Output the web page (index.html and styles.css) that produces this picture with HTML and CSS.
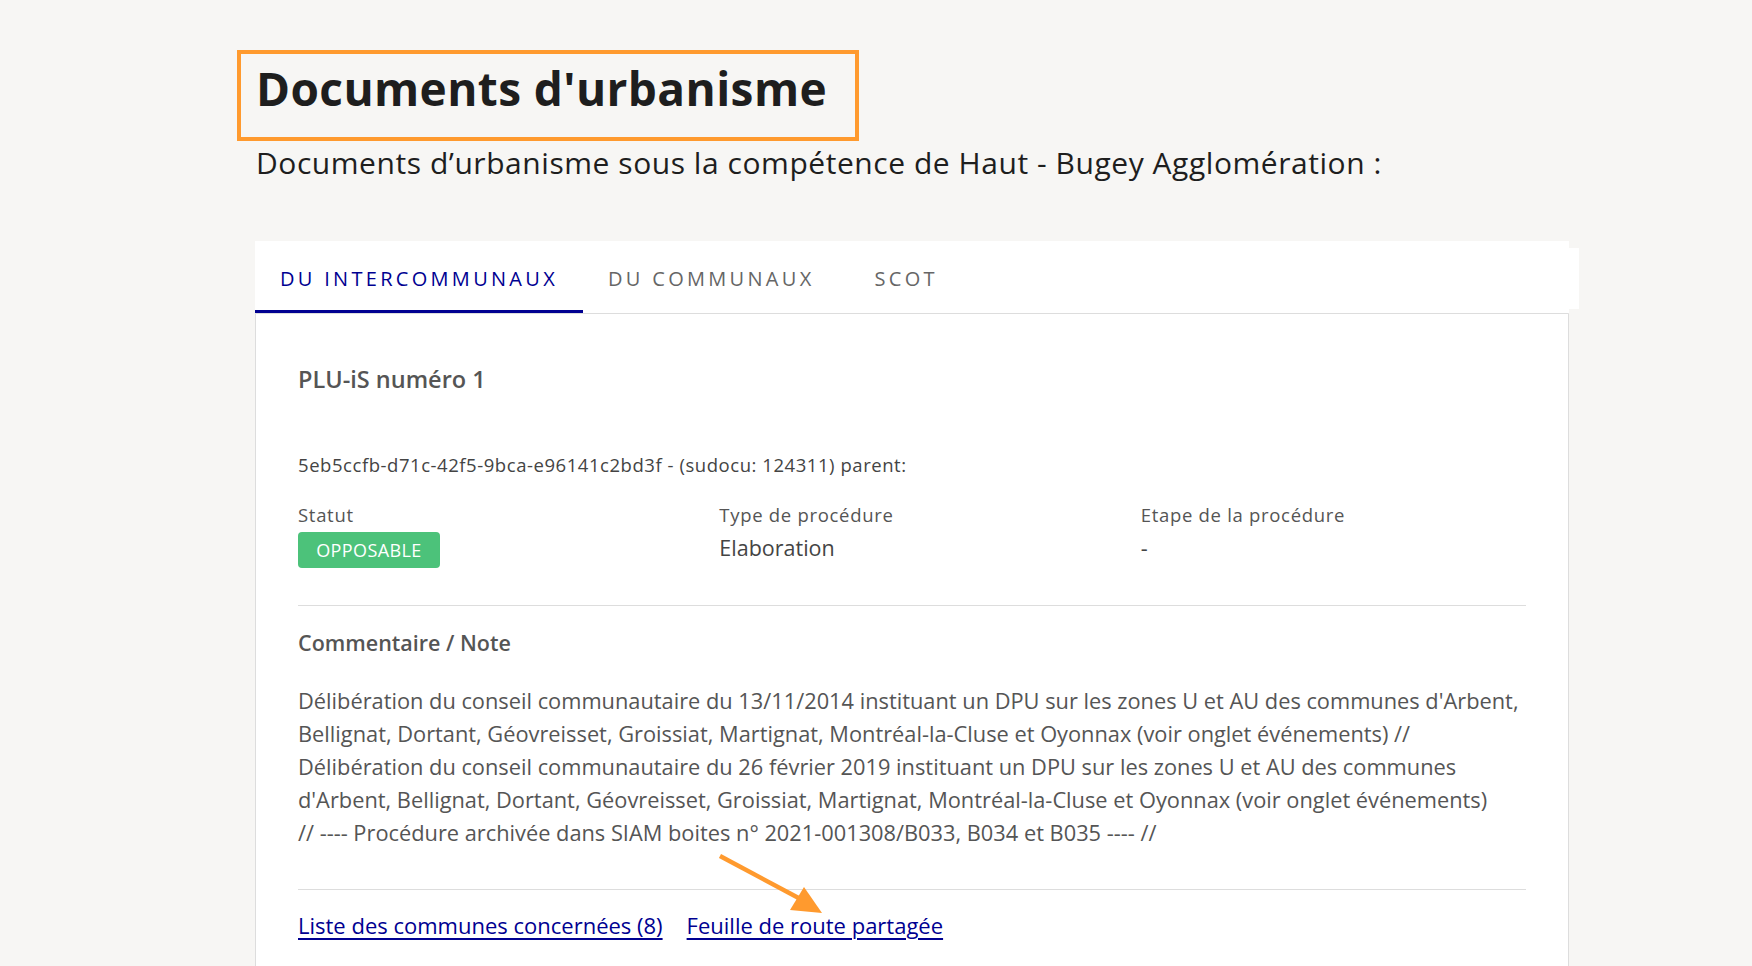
FILE: index.html
```html
<!DOCTYPE html>
<html lang="fr">
<head>
<meta charset="utf-8">
<title>Documents d'urbanisme</title>
<link rel="stylesheet" href="styles.css">
</head>
<body>
<main class="page">
  <div class="title-box">
    <h1 class="title">Documents d'urbanisme</h1>
  </div>
  <p class="subtitle">Documents d’urbanisme sous la compétence de Haut - Bugey Agglomération :</p>

  <nav class="tabs">
    <span class="tab tab-active">DU INTERCOMMUNAUX</span>
    <span class="tab">DU COMMUNAUX</span>
    <span class="tab tab-last">SCOT</span>
  </nav>

  <section class="card">
    <h2 class="card-title">PLU-iS numéro 1</h2>
    <p class="card-id">5eb5ccfb-d71c-42f5-9bca-e96141c2bd3f - (sudocu: 124311) parent:</p>
    <div class="fields">
      <div class="field">
        <div class="field-label">Statut</div>
        <span class="badge">OPPOSABLE</span>
      </div>
      <div class="field">
        <div class="field-label">Type de procédure</div>
        <div class="field-value">Elaboration</div>
      </div>
      <div class="field">
        <div class="field-label">Etape de la procédure</div>
        <div class="field-value">-</div>
      </div>
    </div>
    <hr class="sep">
    <h3 class="note-title">Commentaire / Note</h3>
    <p class="note">Délibération du conseil communautaire du 13/11/2014 instituant un DPU sur les zones U et AU des communes d'Arbent, Bellignat, Dortant, Géovreisset, Groissiat, Martignat, Montréal-la-Cluse et Oyonnax (voir onglet événements) // Délibération du conseil communautaire du 26 février 2019 instituant un DPU sur les zones U et AU des communes d'Arbent, Bellignat, Dortant, Géovreisset, Groissiat, Martignat, Montréal-la-Cluse et Oyonnax (voir onglet événements) <span class="nowrap">// ----</span> Procédure archivée dans SIAM boites n° 2021-001308/B033, B034 et B035 <span class="nowrap">---- //</span></p>
    <hr class="sep sep-2">
    <div class="links">
      <a class="link" href="#">Liste des communes concernées (8)</a>
      <a class="link" href="#">Feuille de route partagée</a>
    </div>
  </section>

  <svg class="arrow" width="120" height="70" viewBox="0 0 120 70">
    <line x1="4" y1="3" x2="92" y2="50" stroke="#FF9A2E" stroke-width="4.5" stroke-linecap="butt"/>
    <polygon points="106,60 74,57 88,34" fill="#FF9A2E"/>
  </svg>
</main>
</body>
</html>
```

FILE: styles.css
```css
* { box-sizing: border-box; }

html, body {
  margin: 0;
  padding: 0;
  background: #f7f6f4;
}

body {
  font-family: "Open Sans", Lato, "Liberation Sans", sans-serif;
  color: #1e1e1e;
}

.page {
  position: relative;
  padding: 50px 183px 0 255px;
  height: 966px;
  overflow: hidden;
}

.title-box {
  display: inline-block;
  margin-left: -18px;
  width: 622px;
  height: 91px;
  border: 4px solid #FF9A2E;
  padding: 4px 0 0 15px;
}

.title {
  margin: 0;
  font-size: 46px;
  line-height: 60px;
  font-weight: 700;
  color: #1e1e1e;
  letter-spacing: 0.4px;
}

.subtitle {
  margin: 2px 0 0 1px;
  font-size: 30px;
  line-height: 40px;
  letter-spacing: 0.55px;
  color: #1e1e1e;
}

.tabs {
  position: relative;
  margin-top: 58px;
  background: #fff;
  height: 72px;
  display: flex;
  align-items: stretch;
}

.tabs::after {
  content: "";
  position: absolute;
  right: -10px;
  top: 7px;
  width: 10px;
  height: 61px;
  background: #fff;
}

.tab {
  display: flex;
  align-items: center;
  padding: 6px 25px 0 25px;
  font-size: 20px;
  letter-spacing: 3.3px;
  color: #666;
  border-bottom: 3px solid transparent;
}

.tab-active {
  color: #000091;
  border-bottom-color: #000091;
}

.tab-last {
  margin-left: 10px;
}

.card {
  background: #fff;
  border: 1px solid #ddd;
  border-radius: 0 0 5px 5px;
  padding: 49px 42px 40px 42px;
  color: #555;
}

.card-title {
  margin: 0;
  font-size: 23.5px;
  line-height: 32px;
  font-weight: 600;
  color: #555;
}

.card-id {
  margin: 56px 0 0 0;
  font-size: 18.5px;
  line-height: 28px;
  letter-spacing: 0.55px;
  color: #444;
}

.fields {
  margin-top: 24px;
  display: grid;
  grid-template-columns: repeat(3, 1fr);
  column-gap: 36px;
}

.field-label {
  font-size: 18.5px;
  line-height: 24px;
  letter-spacing: 0.7px;
  color: #555;
}

.field-value {
  margin-top: 8px;
  font-size: 21.5px;
  line-height: 26px;
  color: #444;
}

.badge {
  display: inline-block;
  margin-top: 5px;
  width: 142px;
  height: 36px;
  line-height: 36px;
  text-align: center;
  background: #4cc27a;
  color: #fff;
  font-size: 18px;
  letter-spacing: 0.4px;
  border-radius: 4px;
}

.sep {
  margin: 37px 0 0 0;
  border: 0;
  border-top: 1px solid #ddd;
}

.note-title {
  margin: 22px 0 0 0;
  font-size: 21.5px;
  line-height: 30px;
  font-weight: 600;
  color: #555;
}

.note {
  margin: 26px 0 0 0;
  font-size: 21.8px;
  line-height: 33px;
  color: #555;
}

.nowrap {
  white-space: nowrap;
}

.sep-2 {
  margin-top: 40px;
}

.links {
  margin-top: 21px;
  display: flex;
  gap: 24px;
}

.link {
  font-size: 22px;
  line-height: 28px;
  color: #000091;
  text-decoration: underline;
  text-decoration-thickness: 1.5px;
  text-underline-offset: 4px;
}

.arrow {
  position: absolute;
  left: 716px;
  top: 853px;
}
```
